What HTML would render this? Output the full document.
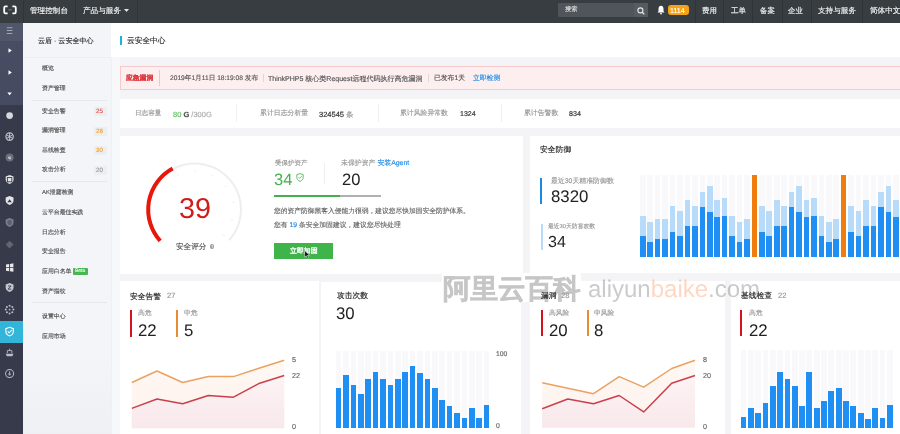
<!DOCTYPE html>
<html><head><meta charset="utf-8">
<style>
*{box-sizing:border-box;margin:0;padding:0}
html,body{width:900px;height:434px;overflow:hidden;background:#f4f4f6;font-family:"Liberation Sans",sans-serif;color:#333}
.abs{position:absolute}
.t{position:absolute;white-space:nowrap;line-height:1;text-rendering:geometricPrecision;will-change:transform;-webkit-text-stroke:0.15px currentColor}
.stripe{position:absolute;background:#f9f9fb}
.bar{position:absolute}
.card{position:absolute;background:#fff}
</style></head><body>
<!-- top bar -->
<div class="abs" style="left:0;top:0;width:900px;height:23px;background:#373d41"></div>
<div class="abs" style="left:23px;top:0;width:1px;height:23px;background:#30353a"></div>
<div class="abs" style="left:75px;top:0;width:1px;height:23px;background:#30353a"></div>
<div class="abs" style="left:137px;top:0;width:1px;height:23px;background:#30353a"></div>
<svg class="abs" style="left:3px;top:5px" width="14" height="10" viewBox="0 0 14 10">
<path d="M4.6 1.3H2.6Q1.2 1.3 1.2 2.7V6.9Q1.2 8.3 2.6 8.3H4.6M9.4 1.3H11.4Q12.8 1.3 12.8 2.7V6.9Q12.8 8.3 11.4 8.3H9.4" fill="none" stroke="#fff" stroke-width="1.8"/>
<path d="M5.5 4.8H8.5" stroke="#8a8e92" stroke-width="0.9"/>
</svg>
<div class="t" style="left:30px;top:6.9px;font-size:7.6px;color:#f2f2f2;-webkit-text-stroke:0.15px #f2f2f2">管理控制台</div>
<div class="t" style="left:83px;top:6.9px;font-size:7.6px;color:#f2f2f2;-webkit-text-stroke:0.15px #f2f2f2">产品与服务</div>
<svg class="abs" style="left:124px;top:9px" width="5" height="3"><path d="M0 0H5L2.5 3Z" fill="#e6e6e6"/></svg>
<div class="abs" style="left:558px;top:3px;width:90px;height:14px;background:#4f555a;border-radius:1px"></div>
<div class="abs" style="left:634px;top:3px;width:14px;height:14px;background:#555b60"></div>
<div class="t" style="left:564.8px;top:7.3px;font-size:6.2px;color:#dcdcdc">搜索</div>
<svg class="abs" style="left:637px;top:6.5px" width="8" height="8" viewBox="0 0 8 8"><circle cx="3.4" cy="3.4" r="2.5" fill="none" stroke="#e8e8e8" stroke-width="1.1"/><path d="M5.2 5.2L7.3 7.3" stroke="#e8e8e8" stroke-width="1.3"/></svg>
<svg class="abs" style="left:657px;top:5px" width="8" height="10" viewBox="0 0 8 10"><path d="M4 0.8C2.2 0.8 1.5 2.3 1.5 4V6.3L0.5 7.6H7.5L6.5 6.3V4C6.5 2.3 5.8 0.8 4 0.8Z" fill="#fff"/><circle cx="4" cy="8.6" r="0.9" fill="#fff"/></svg>
<div class="abs" style="left:667.5px;top:5px;width:21px;height:10px;background:#f6a316;border-radius:3px"></div>
<div class="t" style="left:670px;top:7.6px;font-size:7.1px;color:#fff">1114</div>
<div class="abs" style="left:695px;top:0;width:1px;height:23px;background:#2f3438"></div>
<div class="abs" style="left:723px;top:0;width:1px;height:23px;background:#2f3438"></div>
<div class="abs" style="left:752px;top:0;width:1px;height:23px;background:#2f3438"></div>
<div class="abs" style="left:782px;top:0;width:1px;height:23px;background:#2f3438"></div>
<div class="abs" style="left:811px;top:0;width:1px;height:23px;background:#2f3438"></div>
<div class="abs" style="left:862px;top:0;width:1px;height:23px;background:#2f3438"></div>
<div class="t" style="left:702px;top:6.9px;font-size:7.4px;color:#f2f2f2;-webkit-text-stroke:0.15px #f2f2f2">费用</div>
<div class="t" style="left:730.5px;top:6.9px;font-size:7.4px;color:#f2f2f2;-webkit-text-stroke:0.15px #f2f2f2">工单</div>
<div class="t" style="left:759.5px;top:6.9px;font-size:7.4px;color:#f2f2f2;-webkit-text-stroke:0.15px #f2f2f2">备案</div>
<div class="t" style="left:788px;top:6.9px;font-size:7.4px;color:#f2f2f2;-webkit-text-stroke:0.15px #f2f2f2">企业</div>
<div class="t" style="left:817.5px;top:6.9px;font-size:7.6px;color:#f2f2f2;-webkit-text-stroke:0.15px #f2f2f2">支持与服务</div>
<div class="t" style="left:870px;top:6.9px;font-size:7.6px;color:#f2f2f2;-webkit-text-stroke:0.15px #f2f2f2">简体中文</div>

<!-- left dark sidebar -->
<div class="abs" style="left:0;top:23px;width:23px;height:411px;background:#363a4b"></div>
<div class="abs" style="left:0;top:23px;width:23px;height:18px;background:#52566b"></div>
<div class="abs" style="left:0;top:41px;width:23px;height:64px;background:linear-gradient(#494d63,#464a60)"></div>
<div class="abs" style="left:0;top:321px;width:23px;height:22px;background:#33b5d9"></div>
<svg class="abs" style="left:4.40px;top:25.40px" width="11.20" height="11.20" viewBox="0 0 10 10"><path d="M2.5 2.5H7.5M2.5 5H7.5M2.5 7.5H7.5" stroke="#a3a7b4" stroke-width="0.9"/></svg>
<svg class="abs" style="left:4.40px;top:45.40px" width="11.20" height="11.20" viewBox="0 0 10 10"><path d="M4 3L7 5L4 7Z" fill="#fff"/></svg>
<svg class="abs" style="left:4.40px;top:67.00px" width="11.20" height="11.20" viewBox="0 0 10 10"><path d="M4 3L7 5L4 7Z" fill="#fff"/></svg>
<svg class="abs" style="left:4.40px;top:88.40px" width="11.20" height="11.20" viewBox="0 0 10 10"><path d="M3 4L7 4L5 6.5Z" fill="#fff"/></svg>
<svg class="abs" style="left:4.40px;top:110.10px" width="11.20" height="11.20" viewBox="0 0 10 10"><circle cx="5" cy="5" r="3" fill="#d5d7dd"/></svg>
<svg class="abs" style="left:4.40px;top:130.60px" width="11.20" height="11.20" viewBox="0 0 10 10"><circle cx="5" cy="5" r="3.3" fill="none" stroke="#b9bcc6" stroke-width="1.1"/><path d="M5 1.5V8.5M2 3.2L8 6.8M2 6.8L8 3.2" stroke="#b9bcc6" stroke-width="0.9"/></svg>
<svg class="abs" style="left:4.40px;top:152.40px" width="11.20" height="11.20" viewBox="0 0 10 10"><circle cx="5" cy="5" r="3.6" fill="#6a6d7a"/><path d="M6.3 4.6H3.9Q3.9 6.6 6.3 6" fill="none" stroke="#dfe0e5" stroke-width="0.8"/></svg>
<svg class="abs" style="left:4.40px;top:174.40px" width="11.20" height="11.20" viewBox="0 0 10 10"><path d="M5 1L8.5 2.2V5.2C8.5 7 7 8.3 5 9C3 8.3 1.5 7 1.5 5.2V2.2Z" fill="#e4e5ea"/><rect x="3" y="3.2" width="4" height="3.8" fill="none" stroke="#363a4b" stroke-width="0.8"/></svg>
<svg class="abs" style="left:4.40px;top:195.40px" width="11.20" height="11.20" viewBox="0 0 10 10"><path d="M5 1L8.5 2.2V5.2C8.5 7 7 8.3 5 9C3 8.3 1.5 7 1.5 5.2V2.2Z" fill="#e4e5ea"/><path d="M3 6.5H7L5 3.8Z" fill="#363a4b"/></svg>
<svg class="abs" style="left:4.40px;top:217.40px" width="11.20" height="11.20" viewBox="0 0 10 10"><path d="M5 1L8.5 2.2V5.2C8.5 7 7 8.3 5 9C3 8.3 1.5 7 1.5 5.2V2.2Z" fill="#7c7f8c"/><path d="M5 2.5L7 3.3V5.3C7 6.3 6.2 7 5 7.5C3.8 7 3 6.3 3 5.3V3.3Z" fill="#5d606d"/></svg>
<svg class="abs" style="left:4.40px;top:239.40px" width="11.20" height="11.20" viewBox="0 0 10 10"><path d="M5 1.5L8.5 5L5 8.5L1.5 5Z" fill="#63666f"/></svg>
<svg class="abs" style="left:4.40px;top:261.90px" width="11.20" height="11.20" viewBox="0 0 10 10"><path d="M1.8 2.2L4.6 1.8V4.6H1.8ZM5.4 1.7L8.4 1.2V4.6H5.4ZM1.8 5.4H4.6V8.2L1.8 7.8ZM5.4 5.4H8.4V8.8L5.4 8.3Z" fill="#e8e9ee"/></svg>
<svg class="abs" style="left:4.40px;top:282.40px" width="11.20" height="11.20" viewBox="0 0 10 10"><path d="M5 1L8.5 2.2V5.2C8.5 7 7 8.3 5 9C3 8.3 1.5 7 1.5 5.2V2.2Z" fill="#c5c7cf"/><path d="M3.6 3.6H6.4L3.6 6.4H6.4" fill="none" stroke="#363a4b" stroke-width="0.8"/></svg>
<svg class="abs" style="left:4.40px;top:304.40px" width="11.20" height="11.20" viewBox="0 0 10 10"><circle cx="8.40" cy="5.00" r="0.9" fill="#b9bcc6"/><circle cx="7.40" cy="7.40" r="0.9" fill="#b9bcc6"/><circle cx="5.00" cy="8.40" r="0.9" fill="#b9bcc6"/><circle cx="2.60" cy="7.40" r="0.9" fill="#b9bcc6"/><circle cx="1.60" cy="5.00" r="0.9" fill="#b9bcc6"/><circle cx="2.60" cy="2.60" r="0.9" fill="#b9bcc6"/><circle cx="5.00" cy="1.60" r="0.9" fill="#b9bcc6"/><circle cx="7.40" cy="2.60" r="0.9" fill="#b9bcc6"/><circle cx="5" cy="5" r="0.8" fill="#b9bcc6"/></svg>
<svg class="abs" style="left:4.40px;top:326.40px" width="11.20" height="11.20" viewBox="0 0 10 10"><path d="M5 1.2L8.3 2.4V5.2C8.3 7 7 8.2 5 8.9C3 8.2 1.7 7 1.7 5.2V2.4Z" fill="none" stroke="#fff" stroke-width="1"/><path d="M3.3 4.9L4.6 6.1L6.9 3.7" fill="none" stroke="#fff" stroke-width="1"/></svg>
<svg class="abs" style="left:4.40px;top:347.40px" width="11.20" height="11.20" viewBox="0 0 10 10"><path d="M1.5 6H8.5L7.5 8.2H2.5Z" fill="#b9bcc6"/><path d="M3 5.5V3.2H7V5.5" fill="none" stroke="#b9bcc6" stroke-width="0.8"/><path d="M5 1.5V3" stroke="#b9bcc6" stroke-width="0.8"/></svg>
<svg class="abs" style="left:4.40px;top:368.40px" width="11.20" height="11.20" viewBox="0 0 10 10"><circle cx="5" cy="5" r="3.6" fill="none" stroke="#b9bcc6" stroke-width="0.9"/><path d="M5 2.8V6.2M3.6 5L5 6.3L6.4 5" fill="none" stroke="#b9bcc6" stroke-width="0.8"/></svg>

<!-- second nav -->
<div class="abs" style="left:23px;top:23px;width:88px;height:411px;background:linear-gradient(#f4f5f9 0,#f4f5f9 330px,#eef0f3 411px)"></div>
<div class="abs" style="left:110.5px;top:23px;width:1px;height:411px;background:#eef0f3"></div>
<div class="t" style="left:37.5px;top:37.7px;font-size:7.05px;color:#2a2a2a">云盾 · 云安全中心</div>
<div class="abs" style="left:23px;top:57px;width:88px;height:1px;background:#eceef2"></div>
<div class="t" style="left:42px;top:66.7px;font-size:5.9px;color:#505050">概览</div>
<div class="t" style="left:42px;top:86.7px;font-size:5.9px;color:#505050">资产管理</div>
<div class="abs" style="left:32px;top:100px;width:75px;height:1px;background:#e6e8ec"></div>
<div class="t" style="left:42px;top:109.7px;font-size:5.9px;color:#505050">安全告警</div>
<div class="t" style="left:42px;top:129.2px;font-size:5.9px;color:#505050">漏洞管理</div>
<div class="t" style="left:42px;top:148.7px;font-size:5.9px;color:#505050">基线检查</div>
<div class="t" style="left:42px;top:168.2px;font-size:5.9px;color:#505050">攻击分析</div>
<div class="abs" style="left:94px;top:107.0px;width:12.5px;height:9px;background:#eceef2"></div>
<div class="abs" style="left:94px;top:126.5px;width:12.5px;height:9px;background:#eceef2"></div>
<div class="abs" style="left:94px;top:146.0px;width:12.5px;height:9px;background:#eceef2"></div>
<div class="abs" style="left:94px;top:165.5px;width:12.5px;height:9px;background:#eceef2"></div>
<div class="t" style="left:96px;top:109.1px;font-size:6.2px;color:#e4564a">25</div>
<div class="t" style="left:96px;top:128.6px;font-size:6.2px;color:#f0a43c">28</div>
<div class="t" style="left:96px;top:148.1px;font-size:6.2px;color:#f0a43c">30</div>
<div class="t" style="left:96px;top:167.6px;font-size:6.2px;color:#999">20</div>
<div class="abs" style="left:32px;top:181.3px;width:75px;height:1px;background:#e6e8ec"></div>
<div class="t" style="left:42px;top:191.2px;font-size:5.9px;color:#505050">AK泄露检测</div>
<div class="t" style="left:42px;top:211.2px;font-size:5.9px;color:#505050">云平台最佳实践</div>
<div class="t" style="left:42px;top:230.7px;font-size:5.9px;color:#505050">日志分析</div>
<div class="t" style="left:42px;top:250.2px;font-size:5.9px;color:#505050">安全报告</div>
<div class="t" style="left:42px;top:269.7px;font-size:5.9px;color:#505050">应用白名单</div>
<div class="abs" style="left:73px;top:268px;width:15px;height:6.6px;background:#47b653;border-radius:1px"></div>
<div class="t" style="left:75px;top:269px;font-size:5px;color:#e8f6ea">Beta</div>
<div class="t" style="left:42px;top:289.7px;font-size:5.9px;color:#505050">资产指纹</div>
<div class="abs" style="left:32px;top:302px;width:75px;height:1px;background:#e6e8ec"></div>
<div class="t" style="left:42px;top:314.7px;font-size:5.9px;color:#505050">设置中心</div>
<div class="t" style="left:42px;top:334.7px;font-size:5.9px;color:#505050">应用市场</div>

<div class="abs" style="left:111.5px;top:57px;width:8px;height:377px;background:#f7f8fa"></div>
<!-- header -->
<div class="abs" style="left:111px;top:23px;width:789px;height:34px;background:#fff"></div>
<div class="abs" style="left:120px;top:35.5px;width:1.5px;height:9.5px;background:#1cb4d6"></div>
<div class="t" style="left:127px;top:37.1px;font-size:7.7px;color:#2a2a2a">云安全中心</div>

<!-- alert banner -->
<div class="abs" style="left:119.5px;top:66px;width:790px;height:24px;background:#fdeff0;border:1px solid #f6c9cd"></div>
<div class="t" style="left:126px;top:75.7px;font-size:6.8px;color:#dd3a3f;font-weight:bold">应急漏洞</div>
<div class="abs" style="left:158.7px;top:70px;width:1px;height:16px;background:#f0c5c8"></div>
<div class="t" style="left:169.5px;top:75.7px;font-size:6.65px;color:#555">2019年1月11日 18:19:08 发布</div>
<div class="abs" style="left:263px;top:74px;width:1px;height:8px;background:#d9d9d9"></div>
<div class="t" style="left:268px;top:75.6px;font-size:7px;color:#555">ThinkPHP5 核心类Request远程代码执行高危漏洞</div>
<div class="abs" style="left:428px;top:74px;width:1px;height:8px;background:#d9d9d9"></div>
<div class="t" style="left:434px;top:75.7px;font-size:6.8px;color:#555">已发布1天</div>
<div class="t" style="left:473px;top:75.7px;font-size:6.8px;color:#1b8ae6">立即检测</div>

<!-- stats bar -->
<div class="abs" style="left:119.5px;top:99px;width:790px;height:28.5px;background:#fff"></div>
<div class="t" style="left:135px;top:111.2px;font-size:6.6px;color:#999">日志容量</div>
<div class="t" style="left:173px;top:110.7px;font-size:7.5px;color:#aaa"><span style="color:#5cb85c">80</span> <b style="color:#555">G</b> /300G</div>
<div class="abs" style="left:236px;top:104px;width:1px;height:18px;background:#f0f0f0"></div>
<div class="t" style="left:259.5px;top:111.2px;font-size:6.9px;color:#999">累计日志分析量</div>
<div class="t" style="left:318.5px;top:110.7px;font-size:7.5px;color:#999"><span style="color:#333;-webkit-text-stroke:0.2px #333">324545</span> 条</div>
<div class="abs" style="left:378px;top:104px;width:1px;height:18px;background:#f0f0f0"></div>
<div class="t" style="left:400px;top:111.2px;font-size:6.85px;color:#999">累计风险异常数</div>
<div class="t" style="left:459.5px;top:111.2px;font-size:7px;color:#333;-webkit-text-stroke:0.2px #333">1324</div>
<div class="abs" style="left:500.5px;top:104px;width:1px;height:18px;background:#f0f0f0"></div>
<div class="t" style="left:523.75px;top:111.2px;font-size:6.85px;color:#999">累计告警数</div>
<div class="t" style="left:569px;top:111.2px;font-size:7.1px;color:#333;-webkit-text-stroke:0.2px #333">834</div>

<!-- card1 score -->
<div class="card" style="left:120px;top:135.5px;width:403px;height:138px"></div>
<svg class="abs" style="left:0;top:0" width="900" height="434">
<path d="M172.70 169.37A46 46 0 0 1 229.18 240.38" fill="none" stroke="#eeeeee" stroke-width="2"/><path d="M160.22 240.92A46.8 46.8 0 0 1 172.67 168.47" fill="none" stroke="#e8170c" stroke-width="4"/><path d="M177.21 173.77L178.55 176.46" stroke="#f6f6f6" stroke-width="1.5"/><path d="M195.00 169.60L195.00 172.60" stroke="#f6f6f6" stroke-width="1.5"/><path d="M212.79 173.77L211.45 176.46" stroke="#f6f6f6" stroke-width="1.5"/><path d="M226.86 185.42L224.47 187.23" stroke="#f6f6f6" stroke-width="1.5"/><path d="M234.29 202.10L231.34 202.67" stroke="#f6f6f6" stroke-width="1.5"/><path d="M233.53 220.36L230.64 219.55" stroke="#f6f6f6" stroke-width="1.5"/><path d="M224.73 236.37L222.50 234.36" stroke="#f6f6f6" stroke-width="1.5"/></svg>
<div class="t" style="left:178.6px;top:194.9px;font-size:28.8px;-webkit-text-stroke:0;color:#d01c1c">39</div>
<div class="t" style="left:175.5px;top:243px;font-size:7.6px;color:#555">安全评分</div>
<div class="abs" style="left:209.6px;top:244.4px;width:4.8px;height:4.8px;border-radius:50%;background:#999"></div>
<div class="t" style="left:211px;top:245px;font-size:4px;color:#fff;font-weight:bold;-webkit-text-stroke:0">?</div>

<div class="t" style="left:274.5px;top:161px;font-size:6.5px;color:#999">受保护资产</div>
<div class="t" style="left:274px;top:172px;font-size:16.5px;-webkit-text-stroke:0;color:#45b04f">34</div>
<svg class="abs" style="left:296px;top:173.3px" width="8" height="9" viewBox="0 0 8 9"><path d="M4 0.6L7.2 1.6V4.4C7.2 6.3 5.8 7.6 4 8.4C2.2 7.6 0.8 6.3 0.8 4.4V1.6Z" fill="none" stroke="#3fae49" stroke-width="0.8"/><path d="M2.5 4.3L3.6 5.4L5.6 3.3" fill="none" stroke="#3fae49" stroke-width="0.8"/></svg>
<div class="abs" style="left:323.8px;top:163px;width:1px;height:20.5px;background:#eeeeee"></div>
<div class="t" style="left:341px;top:160.9px;font-size:6.9px;color:#999">未保护资产 <span style="color:#1b8ae6">安装Agent</span></div>
<div class="t" style="left:341.5px;top:172px;font-size:16.5px;-webkit-text-stroke:0;color:#222">20</div>
<div class="abs" style="left:274px;top:195px;width:66px;height:2px;background:#45b04f"></div>
<div class="abs" style="left:340px;top:195px;width:41px;height:2px;background:#b0b0b0"></div>
<div class="t" style="left:274px;top:208.9px;font-size:6.75px;color:#666">您的资产防御黑客入侵能力很弱，建议您尽快加固安全防护体系。</div>
<div class="t" style="left:274px;top:222.9px;font-size:6.8px;color:#666">您有 <span style="color:#1b8ae6">19</span> 条安全加固建议，建议您尽快处理</div>
<div class="abs" style="left:273.75px;top:243px;width:59px;height:15.6px;background:#3fb44b"></div>
<div class="t" style="left:290px;top:248.6px;font-size:6.9px;color:#fff;-webkit-text-stroke:0.35px #fff">立即加固</div>
<svg class="abs" style="left:303.6px;top:250.2px" width="7" height="9" viewBox="0 0 7 9"><path d="M0.6 0.5V7.2L2.2 5.8L3.4 8.4L4.5 7.9L3.3 5.3H5.6Z" fill="#111" stroke="#fff" stroke-width="0.5"/></svg>

<!-- card2 defense -->
<div class="card" style="left:530px;top:135.5px;width:370px;height:137px"></div>
<div class="t" style="left:539.5px;top:146.2px;font-size:7.8px;color:#222">安全防御</div>
<div class="abs" style="left:540px;top:177.5px;width:2px;height:26px;background:#1b8ae6"></div>
<div class="t" style="left:551px;top:179.1px;font-size:6.9px;color:#999">最近30天精准防御数</div>
<div class="t" style="left:550.5px;top:188.8px;font-size:16.8px;-webkit-text-stroke:0;color:#222">8320</div>
<div class="abs" style="left:541px;top:223.5px;width:1.5px;height:26px;background:#b8dbfa"></div>
<div class="t" style="left:548px;top:225.2px;font-size:5.8px;color:#999">最近30天防篡改数</div>
<div class="t" style="left:548px;top:234.6px;font-size:16px;-webkit-text-stroke:0;color:#222">34</div>
<div class="stripe" style="left:640.00px;top:174.7px;width:5.6px;height:82.0px"></div>
<div class="bar" style="left:640.00px;top:216.2px;width:5.6px;height:20.2px;background:#b8dbfa"></div>
<div class="bar" style="left:640.00px;top:236.4px;width:5.6px;height:20.3px;background:#1f8ff4"></div>
<div class="stripe" style="left:647.44px;top:174.7px;width:5.6px;height:82.0px"></div>
<div class="bar" style="left:647.44px;top:221.6px;width:5.6px;height:20.1px;background:#b8dbfa"></div>
<div class="bar" style="left:647.44px;top:241.7px;width:5.6px;height:15.0px;background:#1f8ff4"></div>
<div class="stripe" style="left:654.88px;top:174.7px;width:5.6px;height:82.0px"></div>
<div class="bar" style="left:654.88px;top:218.6px;width:5.6px;height:20.4px;background:#b8dbfa"></div>
<div class="bar" style="left:654.88px;top:239.0px;width:5.6px;height:17.7px;background:#1f8ff4"></div>
<div class="stripe" style="left:662.32px;top:174.7px;width:5.6px;height:82.0px"></div>
<div class="bar" style="left:662.32px;top:218.6px;width:5.6px;height:20.4px;background:#b8dbfa"></div>
<div class="bar" style="left:662.32px;top:239.0px;width:5.6px;height:17.7px;background:#1f8ff4"></div>
<div class="stripe" style="left:669.76px;top:174.7px;width:5.6px;height:82.0px"></div>
<div class="bar" style="left:669.76px;top:206.0px;width:5.6px;height:25.5px;background:#b8dbfa"></div>
<div class="bar" style="left:669.76px;top:231.5px;width:5.6px;height:25.2px;background:#1f8ff4"></div>
<div class="stripe" style="left:677.20px;top:174.7px;width:5.6px;height:82.0px"></div>
<div class="bar" style="left:677.20px;top:210.5px;width:5.6px;height:25.5px;background:#b8dbfa"></div>
<div class="bar" style="left:677.20px;top:236.0px;width:5.6px;height:20.7px;background:#1f8ff4"></div>
<div class="stripe" style="left:684.64px;top:174.7px;width:5.6px;height:82.0px"></div>
<div class="bar" style="left:684.64px;top:200.0px;width:5.6px;height:25.5px;background:#b8dbfa"></div>
<div class="bar" style="left:684.64px;top:225.5px;width:5.6px;height:31.2px;background:#1f8ff4"></div>
<div class="stripe" style="left:692.08px;top:174.7px;width:5.6px;height:82.0px"></div>
<div class="bar" style="left:692.08px;top:206.0px;width:5.6px;height:20.1px;background:#b8dbfa"></div>
<div class="bar" style="left:692.08px;top:226.1px;width:5.6px;height:30.6px;background:#1f8ff4"></div>
<div class="stripe" style="left:699.52px;top:174.7px;width:5.6px;height:82.0px"></div>
<div class="bar" style="left:699.52px;top:191.6px;width:5.6px;height:15.6px;background:#b8dbfa"></div>
<div class="bar" style="left:699.52px;top:207.2px;width:5.6px;height:49.5px;background:#1f8ff4"></div>
<div class="stripe" style="left:706.96px;top:174.7px;width:5.6px;height:82.0px"></div>
<div class="bar" style="left:706.96px;top:186.2px;width:5.6px;height:25.8px;background:#b8dbfa"></div>
<div class="bar" style="left:706.96px;top:212.0px;width:5.6px;height:44.7px;background:#1f8ff4"></div>
<div class="stripe" style="left:714.40px;top:174.7px;width:5.6px;height:82.0px"></div>
<div class="bar" style="left:714.40px;top:199.7px;width:5.6px;height:17.4px;background:#b8dbfa"></div>
<div class="bar" style="left:714.40px;top:217.1px;width:5.6px;height:39.6px;background:#1f8ff4"></div>
<div class="stripe" style="left:721.84px;top:174.7px;width:5.6px;height:82.0px"></div>
<div class="bar" style="left:721.84px;top:198.2px;width:5.6px;height:17.4px;background:#b8dbfa"></div>
<div class="bar" style="left:721.84px;top:215.6px;width:5.6px;height:41.1px;background:#1f8ff4"></div>
<div class="stripe" style="left:729.28px;top:174.7px;width:5.6px;height:82.0px"></div>
<div class="bar" style="left:729.28px;top:216.2px;width:5.6px;height:20.2px;background:#b8dbfa"></div>
<div class="bar" style="left:729.28px;top:236.4px;width:5.6px;height:20.3px;background:#1f8ff4"></div>
<div class="stripe" style="left:736.72px;top:174.7px;width:5.6px;height:82.0px"></div>
<div class="bar" style="left:736.72px;top:221.6px;width:5.6px;height:20.1px;background:#b8dbfa"></div>
<div class="bar" style="left:736.72px;top:241.7px;width:5.6px;height:15.0px;background:#1f8ff4"></div>
<div class="stripe" style="left:744.16px;top:174.7px;width:5.6px;height:82.0px"></div>
<div class="bar" style="left:744.16px;top:218.6px;width:5.6px;height:20.4px;background:#b8dbfa"></div>
<div class="bar" style="left:744.16px;top:239.0px;width:5.6px;height:17.7px;background:#1f8ff4"></div>
<div class="stripe" style="left:751.60px;top:174.7px;width:5.6px;height:82.0px"></div>
<div class="bar" style="left:751.60px;top:174.7px;width:5.6px;height:82.0px;background:#ef7d0d"></div>
<div class="stripe" style="left:759.04px;top:174.7px;width:5.6px;height:82.0px"></div>
<div class="bar" style="left:759.04px;top:206.0px;width:5.6px;height:25.5px;background:#b8dbfa"></div>
<div class="bar" style="left:759.04px;top:231.5px;width:5.6px;height:25.2px;background:#1f8ff4"></div>
<div class="stripe" style="left:766.48px;top:174.7px;width:5.6px;height:82.0px"></div>
<div class="bar" style="left:766.48px;top:210.5px;width:5.6px;height:25.5px;background:#b8dbfa"></div>
<div class="bar" style="left:766.48px;top:236.0px;width:5.6px;height:20.7px;background:#1f8ff4"></div>
<div class="stripe" style="left:773.92px;top:174.7px;width:5.6px;height:82.0px"></div>
<div class="bar" style="left:773.92px;top:200.0px;width:5.6px;height:25.5px;background:#b8dbfa"></div>
<div class="bar" style="left:773.92px;top:225.5px;width:5.6px;height:31.2px;background:#1f8ff4"></div>
<div class="stripe" style="left:781.36px;top:174.7px;width:5.6px;height:82.0px"></div>
<div class="bar" style="left:781.36px;top:206.0px;width:5.6px;height:20.1px;background:#b8dbfa"></div>
<div class="bar" style="left:781.36px;top:226.1px;width:5.6px;height:30.6px;background:#1f8ff4"></div>
<div class="stripe" style="left:788.80px;top:174.7px;width:5.6px;height:82.0px"></div>
<div class="bar" style="left:788.80px;top:191.6px;width:5.6px;height:15.6px;background:#b8dbfa"></div>
<div class="bar" style="left:788.80px;top:207.2px;width:5.6px;height:49.5px;background:#1f8ff4"></div>
<div class="stripe" style="left:796.24px;top:174.7px;width:5.6px;height:82.0px"></div>
<div class="bar" style="left:796.24px;top:186.2px;width:5.6px;height:25.8px;background:#b8dbfa"></div>
<div class="bar" style="left:796.24px;top:212.0px;width:5.6px;height:44.7px;background:#1f8ff4"></div>
<div class="stripe" style="left:803.68px;top:174.7px;width:5.6px;height:82.0px"></div>
<div class="bar" style="left:803.68px;top:199.7px;width:5.6px;height:17.4px;background:#b8dbfa"></div>
<div class="bar" style="left:803.68px;top:217.1px;width:5.6px;height:39.6px;background:#1f8ff4"></div>
<div class="stripe" style="left:811.12px;top:174.7px;width:5.6px;height:82.0px"></div>
<div class="bar" style="left:811.12px;top:198.2px;width:5.6px;height:17.4px;background:#b8dbfa"></div>
<div class="bar" style="left:811.12px;top:215.6px;width:5.6px;height:41.1px;background:#1f8ff4"></div>
<div class="stripe" style="left:818.56px;top:174.7px;width:5.6px;height:82.0px"></div>
<div class="bar" style="left:818.56px;top:216.2px;width:5.6px;height:20.2px;background:#b8dbfa"></div>
<div class="bar" style="left:818.56px;top:236.4px;width:5.6px;height:20.3px;background:#1f8ff4"></div>
<div class="stripe" style="left:826.00px;top:174.7px;width:5.6px;height:82.0px"></div>
<div class="bar" style="left:826.00px;top:221.6px;width:5.6px;height:20.1px;background:#b8dbfa"></div>
<div class="bar" style="left:826.00px;top:241.7px;width:5.6px;height:15.0px;background:#1f8ff4"></div>
<div class="stripe" style="left:833.44px;top:174.7px;width:5.6px;height:82.0px"></div>
<div class="bar" style="left:833.44px;top:218.6px;width:5.6px;height:20.4px;background:#b8dbfa"></div>
<div class="bar" style="left:833.44px;top:239.0px;width:5.6px;height:17.7px;background:#1f8ff4"></div>
<div class="stripe" style="left:840.88px;top:174.7px;width:5.6px;height:82.0px"></div>
<div class="bar" style="left:840.88px;top:174.7px;width:5.6px;height:82.0px;background:#ef7d0d"></div>
<div class="stripe" style="left:848.32px;top:174.7px;width:5.6px;height:82.0px"></div>
<div class="bar" style="left:848.32px;top:206.0px;width:5.6px;height:25.5px;background:#b8dbfa"></div>
<div class="bar" style="left:848.32px;top:231.5px;width:5.6px;height:25.2px;background:#1f8ff4"></div>
<div class="stripe" style="left:855.76px;top:174.7px;width:5.6px;height:82.0px"></div>
<div class="bar" style="left:855.76px;top:210.5px;width:5.6px;height:25.5px;background:#b8dbfa"></div>
<div class="bar" style="left:855.76px;top:236.0px;width:5.6px;height:20.7px;background:#1f8ff4"></div>
<div class="stripe" style="left:863.20px;top:174.7px;width:5.6px;height:82.0px"></div>
<div class="bar" style="left:863.20px;top:200.0px;width:5.6px;height:25.5px;background:#b8dbfa"></div>
<div class="bar" style="left:863.20px;top:225.5px;width:5.6px;height:31.2px;background:#1f8ff4"></div>
<div class="stripe" style="left:870.64px;top:174.7px;width:5.6px;height:82.0px"></div>
<div class="bar" style="left:870.64px;top:206.0px;width:5.6px;height:20.1px;background:#b8dbfa"></div>
<div class="bar" style="left:870.64px;top:226.1px;width:5.6px;height:30.6px;background:#1f8ff4"></div>
<div class="stripe" style="left:878.08px;top:174.7px;width:5.6px;height:82.0px"></div>
<div class="bar" style="left:878.08px;top:191.6px;width:5.6px;height:15.6px;background:#b8dbfa"></div>
<div class="bar" style="left:878.08px;top:207.2px;width:5.6px;height:49.5px;background:#1f8ff4"></div>
<div class="stripe" style="left:885.52px;top:174.7px;width:5.6px;height:82.0px"></div>
<div class="bar" style="left:885.52px;top:186.2px;width:5.6px;height:25.8px;background:#b8dbfa"></div>
<div class="bar" style="left:885.52px;top:212.0px;width:5.6px;height:44.7px;background:#1f8ff4"></div>
<div class="stripe" style="left:892.96px;top:174.7px;width:5.6px;height:82.0px"></div>
<div class="bar" style="left:892.96px;top:199.7px;width:5.6px;height:17.4px;background:#b8dbfa"></div>
<div class="bar" style="left:892.96px;top:217.1px;width:5.6px;height:39.6px;background:#1f8ff4"></div>

<!-- bottom cards -->
<div class="card" style="left:120px;top:281px;width:199px;height:153px"></div>
<div class="card" style="left:321px;top:281.5px;width:200px;height:153px"></div>
<div class="card" style="left:530px;top:281px;width:195px;height:153px"></div>
<div class="card" style="left:731px;top:281px;width:169px;height:153px"></div>

<div class="t" style="left:129.5px;top:292.5px;font-size:7.75px;color:#222">安全告警</div>
<div class="t" style="left:166.5px;top:292.3px;font-size:7.6px;color:#999">27</div>
<div class="abs" style="left:130px;top:310px;width:2px;height:26.5px;background:#d0131e"></div>
<div class="t" style="left:138.3px;top:311px;font-size:6.8px;color:#999">高危</div>
<div class="t" style="left:138px;top:322.8px;font-size:16.8px;-webkit-text-stroke:0;color:#222">22</div>
<div class="abs" style="left:175.5px;top:310px;width:2px;height:26.5px;background:#e88b35"></div>
<div class="t" style="left:183.8px;top:311px;font-size:6.8px;color:#999">中危</div>
<div class="t" style="left:183.5px;top:322.8px;font-size:16.8px;-webkit-text-stroke:0;color:#222">5</div>

<div class="t" style="left:336.5px;top:292px;font-size:7.75px;color:#222">攻击次数</div>
<div class="t" style="left:336px;top:305.5px;font-size:16.8px;-webkit-text-stroke:0;color:#222">30</div>
<div class="stripe" style="left:335.70px;top:350.6px;width:5.8px;height:77.6px"></div>
<div class="bar" style="left:335.70px;top:387.8px;width:5.8px;height:40.4px;background:#1f8ff4"></div>
<div class="stripe" style="left:343.10px;top:350.6px;width:5.8px;height:77.6px"></div>
<div class="bar" style="left:343.10px;top:374.9px;width:5.8px;height:53.3px;background:#1f8ff4"></div>
<div class="stripe" style="left:350.50px;top:350.6px;width:5.8px;height:77.6px"></div>
<div class="bar" style="left:350.50px;top:385.1px;width:5.8px;height:43.1px;background:#1f8ff4"></div>
<div class="stripe" style="left:357.90px;top:350.6px;width:5.8px;height:77.6px"></div>
<div class="bar" style="left:357.90px;top:394.4px;width:5.8px;height:33.8px;background:#1f8ff4"></div>
<div class="stripe" style="left:365.30px;top:350.6px;width:5.8px;height:77.6px"></div>
<div class="bar" style="left:365.30px;top:379.3px;width:5.8px;height:48.9px;background:#1f8ff4"></div>
<div class="stripe" style="left:372.70px;top:350.6px;width:5.8px;height:77.6px"></div>
<div class="bar" style="left:372.70px;top:371.5px;width:5.8px;height:56.7px;background:#1f8ff4"></div>
<div class="stripe" style="left:380.10px;top:350.6px;width:5.8px;height:77.6px"></div>
<div class="bar" style="left:380.10px;top:378.9px;width:5.8px;height:49.3px;background:#1f8ff4"></div>
<div class="stripe" style="left:387.50px;top:350.6px;width:5.8px;height:77.6px"></div>
<div class="bar" style="left:387.50px;top:385.1px;width:5.8px;height:43.1px;background:#1f8ff4"></div>
<div class="stripe" style="left:394.90px;top:350.6px;width:5.8px;height:77.6px"></div>
<div class="bar" style="left:394.90px;top:379.3px;width:5.8px;height:48.9px;background:#1f8ff4"></div>
<div class="stripe" style="left:402.30px;top:350.6px;width:5.8px;height:77.6px"></div>
<div class="bar" style="left:402.30px;top:371.5px;width:5.8px;height:56.7px;background:#1f8ff4"></div>
<div class="stripe" style="left:409.70px;top:350.6px;width:5.8px;height:77.6px"></div>
<div class="bar" style="left:409.70px;top:366.0px;width:5.8px;height:62.2px;background:#1f8ff4"></div>
<div class="stripe" style="left:417.10px;top:350.6px;width:5.8px;height:77.6px"></div>
<div class="bar" style="left:417.10px;top:373.3px;width:5.8px;height:54.9px;background:#1f8ff4"></div>
<div class="stripe" style="left:424.50px;top:350.6px;width:5.8px;height:77.6px"></div>
<div class="bar" style="left:424.50px;top:379.3px;width:5.8px;height:48.9px;background:#1f8ff4"></div>
<div class="stripe" style="left:431.90px;top:350.6px;width:5.8px;height:77.6px"></div>
<div class="bar" style="left:431.90px;top:387.8px;width:5.8px;height:40.4px;background:#1f8ff4"></div>
<div class="stripe" style="left:439.30px;top:350.6px;width:5.8px;height:77.6px"></div>
<div class="bar" style="left:439.30px;top:400.4px;width:5.8px;height:27.8px;background:#1f8ff4"></div>
<div class="stripe" style="left:446.70px;top:350.6px;width:5.8px;height:77.6px"></div>
<div class="bar" style="left:446.70px;top:405.5px;width:5.8px;height:22.7px;background:#1f8ff4"></div>
<div class="stripe" style="left:454.10px;top:350.6px;width:5.8px;height:77.6px"></div>
<div class="bar" style="left:454.10px;top:412.6px;width:5.8px;height:15.6px;background:#1f8ff4"></div>
<div class="stripe" style="left:461.50px;top:350.6px;width:5.8px;height:77.6px"></div>
<div class="bar" style="left:461.50px;top:418.4px;width:5.8px;height:9.8px;background:#1f8ff4"></div>
<div class="stripe" style="left:468.90px;top:350.6px;width:5.8px;height:77.6px"></div>
<div class="bar" style="left:468.90px;top:407.8px;width:5.8px;height:20.4px;background:#1f8ff4"></div>
<div class="stripe" style="left:476.30px;top:350.6px;width:5.8px;height:77.6px"></div>
<div class="bar" style="left:476.30px;top:417.8px;width:5.8px;height:10.4px;background:#1f8ff4"></div>
<div class="stripe" style="left:483.70px;top:350.6px;width:5.8px;height:77.6px"></div>
<div class="bar" style="left:483.70px;top:404.6px;width:5.8px;height:23.6px;background:#1f8ff4"></div>
<div class="t" style="left:495.5px;top:351.6px;font-size:6.8px;color:#666">100</div>
<div class="t" style="left:495.5px;top:424.3px;font-size:6.8px;color:#666">0</div>

<div class="t" style="left:540.5px;top:292px;font-size:7.75px;color:#222">漏洞</div>
<div class="t" style="left:561px;top:292.2px;font-size:7.6px;color:#999">28</div>
<div class="abs" style="left:541px;top:310px;width:2px;height:26px;background:#d0131e"></div>
<div class="t" style="left:549.2px;top:310.8px;font-size:6.8px;color:#999">高风险</div>
<div class="t" style="left:549px;top:323px;font-size:16.8px;-webkit-text-stroke:0;color:#222">20</div>
<div class="abs" style="left:586.5px;top:310px;width:2px;height:26px;background:#e88b35"></div>
<div class="t" style="left:594.2px;top:310.8px;font-size:6.8px;color:#999">中风险</div>
<div class="t" style="left:594px;top:323px;font-size:16.8px;-webkit-text-stroke:0;color:#222">8</div>

<div class="t" style="left:740.6px;top:292px;font-size:7.75px;color:#222">基线检查</div>
<div class="t" style="left:777.6px;top:292.2px;font-size:7.6px;color:#999">22</div>
<div class="abs" style="left:740px;top:310px;width:2px;height:26px;background:#d0131e"></div>
<div class="t" style="left:749px;top:311px;font-size:6.8px;color:#999">高危</div>
<div class="t" style="left:749px;top:322.8px;font-size:16.8px;-webkit-text-stroke:0;color:#222">22</div>
<div class="stripe" style="left:740.60px;top:349.7px;width:5.8px;height:78.7px"></div>
<div class="bar" style="left:740.60px;top:416.9px;width:5.8px;height:11.5px;background:#1f8ff4"></div>
<div class="stripe" style="left:747.92px;top:349.7px;width:5.8px;height:78.7px"></div>
<div class="bar" style="left:747.92px;top:408.3px;width:5.8px;height:20.1px;background:#1f8ff4"></div>
<div class="stripe" style="left:755.24px;top:349.7px;width:5.8px;height:78.7px"></div>
<div class="bar" style="left:755.24px;top:413.0px;width:5.8px;height:15.4px;background:#1f8ff4"></div>
<div class="stripe" style="left:762.56px;top:349.7px;width:5.8px;height:78.7px"></div>
<div class="bar" style="left:762.56px;top:403.1px;width:5.8px;height:25.3px;background:#1f8ff4"></div>
<div class="stripe" style="left:769.88px;top:349.7px;width:5.8px;height:78.7px"></div>
<div class="bar" style="left:769.88px;top:385.5px;width:5.8px;height:42.9px;background:#1f8ff4"></div>
<div class="stripe" style="left:777.20px;top:349.7px;width:5.8px;height:78.7px"></div>
<div class="bar" style="left:777.20px;top:371.9px;width:5.8px;height:56.5px;background:#1f8ff4"></div>
<div class="stripe" style="left:784.52px;top:349.7px;width:5.8px;height:78.7px"></div>
<div class="bar" style="left:784.52px;top:379.0px;width:5.8px;height:49.4px;background:#1f8ff4"></div>
<div class="stripe" style="left:791.84px;top:349.7px;width:5.8px;height:78.7px"></div>
<div class="bar" style="left:791.84px;top:385.5px;width:5.8px;height:42.9px;background:#1f8ff4"></div>
<div class="stripe" style="left:799.16px;top:349.7px;width:5.8px;height:78.7px"></div>
<div class="bar" style="left:799.16px;top:405.7px;width:5.8px;height:22.7px;background:#1f8ff4"></div>
<div class="stripe" style="left:806.48px;top:349.7px;width:5.8px;height:78.7px"></div>
<div class="bar" style="left:806.48px;top:371.9px;width:5.8px;height:56.5px;background:#1f8ff4"></div>
<div class="stripe" style="left:813.80px;top:349.7px;width:5.8px;height:78.7px"></div>
<div class="bar" style="left:813.80px;top:408.3px;width:5.8px;height:20.1px;background:#1f8ff4"></div>
<div class="stripe" style="left:821.12px;top:349.7px;width:5.8px;height:78.7px"></div>
<div class="bar" style="left:821.12px;top:400.7px;width:5.8px;height:27.7px;background:#1f8ff4"></div>
<div class="stripe" style="left:828.44px;top:349.7px;width:5.8px;height:78.7px"></div>
<div class="bar" style="left:828.44px;top:390.9px;width:5.8px;height:37.5px;background:#1f8ff4"></div>
<div class="stripe" style="left:835.76px;top:349.7px;width:5.8px;height:78.7px"></div>
<div class="bar" style="left:835.76px;top:388.1px;width:5.8px;height:40.3px;background:#1f8ff4"></div>
<div class="stripe" style="left:843.08px;top:349.7px;width:5.8px;height:78.7px"></div>
<div class="bar" style="left:843.08px;top:400.7px;width:5.8px;height:27.7px;background:#1f8ff4"></div>
<div class="stripe" style="left:850.40px;top:349.7px;width:5.8px;height:78.7px"></div>
<div class="bar" style="left:850.40px;top:405.7px;width:5.8px;height:22.7px;background:#1f8ff4"></div>
<div class="stripe" style="left:857.72px;top:349.7px;width:5.8px;height:78.7px"></div>
<div class="bar" style="left:857.72px;top:413.0px;width:5.8px;height:15.4px;background:#1f8ff4"></div>
<div class="stripe" style="left:865.04px;top:349.7px;width:5.8px;height:78.7px"></div>
<div class="bar" style="left:865.04px;top:419.1px;width:5.8px;height:9.3px;background:#1f8ff4"></div>
<div class="stripe" style="left:872.36px;top:349.7px;width:5.8px;height:78.7px"></div>
<div class="bar" style="left:872.36px;top:408.3px;width:5.8px;height:20.1px;background:#1f8ff4"></div>
<div class="stripe" style="left:879.68px;top:349.7px;width:5.8px;height:78.7px"></div>
<div class="bar" style="left:879.68px;top:418.0px;width:5.8px;height:10.4px;background:#1f8ff4"></div>
<div class="stripe" style="left:887.00px;top:349.7px;width:5.8px;height:78.7px"></div>
<div class="bar" style="left:887.00px;top:405.0px;width:5.8px;height:23.4px;background:#1f8ff4"></div>

<svg class="abs" style="left:0;top:0" width="900" height="434">
<defs><linearGradient id="go1" gradientUnits="userSpaceOnUse" x1="0" y1="360" x2="0" y2="428.2"><stop offset="0" stop-color="#fff8f3"/><stop offset="1" stop-color="#fdf1ee"/></linearGradient>
<linearGradient id="gr1" gradientUnits="userSpaceOnUse" x1="0" y1="376" x2="0" y2="428.2"><stop offset="0" stop-color="#fdf3f4"/><stop offset="1" stop-color="#f8e8eb"/></linearGradient></defs>
<polygon points="131.8,382.5 157.0,371.0 182.7,382.5 208.3,376.6 233.5,376.6 259.7,368.0 284.2,360.3 284.2,428.2 131.8,428.2" fill="url(#go1)"/>
<polygon points="131.8,408.4 157.0,399.0 182.7,403.7 208.3,395.5 233.5,397.2 259.7,383.2 284.2,375.5 284.2,428.2 131.8,428.2" fill="url(#gr1)"/>
<polyline points="131.8,382.5 157.0,371.0 182.7,382.5 208.3,376.6 233.5,376.6 259.7,368.0 284.2,360.3" fill="none" stroke="#e9a263" stroke-width="1.5" stroke-linejoin="round"/>
<polyline points="131.8,408.4 157.0,399.0 182.7,403.7 208.3,395.5 233.5,397.2 259.7,383.2 284.2,375.5" fill="none" stroke="#c9404b" stroke-width="1.5" stroke-linejoin="round"/>
</svg>
<div class="t" style="left:292.3px;top:356.4px;font-size:7.2px;color:#666">5</div>
<div class="t" style="left:292.3px;top:372.3px;font-size:7.2px;color:#666">22</div>
<div class="t" style="left:292.3px;top:422.8px;font-size:7.2px;color:#666">0</div>
<svg class="abs" style="left:0;top:0" width="900" height="434">
<defs><linearGradient id="go2" gradientUnits="userSpaceOnUse" x1="0" y1="360" x2="0" y2="427.5"><stop offset="0" stop-color="#fff8f3"/><stop offset="1" stop-color="#fdf1ee"/></linearGradient>
<linearGradient id="gr2" gradientUnits="userSpaceOnUse" x1="0" y1="376" x2="0" y2="427.5"><stop offset="0" stop-color="#fdf3f4"/><stop offset="1" stop-color="#f8e8eb"/></linearGradient></defs>
<polygon points="542.2,382.7 567.8,388.2 593.5,393.7 619.2,376.6 643.7,387.1 671.7,368.5 695.0,360.3 695.0,427.5 542.2,427.5" fill="url(#go2)"/>
<polygon points="542.2,408.8 567.8,399.0 593.5,403.7 619.2,395.5 643.7,411.9 671.7,383.2 695.0,375.5 695.0,427.5 542.2,427.5" fill="url(#gr2)"/>
<polyline points="542.2,382.7 567.8,388.2 593.5,393.7 619.2,376.6 643.7,387.1 671.7,368.5 695.0,360.3" fill="none" stroke="#e9a263" stroke-width="1.5" stroke-linejoin="round"/>
<polyline points="542.2,408.8 567.8,399.0 593.5,403.7 619.2,395.5 643.7,411.9 671.7,383.2 695.0,375.5" fill="none" stroke="#c9404b" stroke-width="1.5" stroke-linejoin="round"/>
</svg>
<div class="t" style="left:703.2px;top:356.4px;font-size:7.2px;color:#666">8</div>
<div class="t" style="left:703.2px;top:372.3px;font-size:7.2px;color:#666">20</div>
<div class="t" style="left:703.2px;top:422.8px;font-size:7.2px;color:#666">0</div>

<!-- watermark -->
<div class="abs" style="left:442px;top:273px;width:139px;height:29px;background:#fff"></div>
<div class="abs" style="left:0;top:0;width:900px;height:434px;opacity:0.36">
<div class="t" style="left:443px;top:274.6px;font-size:27.5px;-webkit-text-stroke:0;font-weight:700;-webkit-text-stroke:0.6px #616161;color:#616161">阿里云百科</div>
<div class="t" style="left:587.5px;top:277.5px;font-size:24px;-webkit-text-stroke:0;color:#6e6e6e">aliyun<span style="color:#f6935b">baike</span>.com</div>
</div>
<div class="t" style="left:540.5px;top:292px;font-size:7.75px;color:#222">漏洞</div>
<div class="t" style="left:561px;top:292.2px;font-size:7.6px;color:#999">28</div>
</body></html>
